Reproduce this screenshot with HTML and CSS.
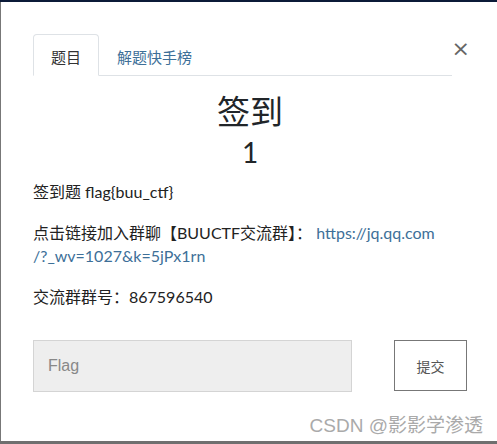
FILE: index.html
```html
<!DOCTYPE html>
<html lang="zh-CN">
<head>
  <meta charset="UTF-8" />
  <title>签到</title>
  <link rel="stylesheet" href="styles.css">
</head>
<body>
  <div class="topbar"></div>
  <div class="modal">
    <div class="modal-header">
      <ul class="tabs">
        <li class="tab active">题目</li>
        <li class="tab">解题快手榜</li>
      </ul>
      <span class="close">&times;</span>
    </div>

    <h2 class="challenge-name">签到</h2>
    <h3 class="challenge-value">1</h3>

    <div class="challenge-desc">
      <p>签到题 flag{buu_ctf}</p>
      <p>点击链接加入群聊【BUUCTF交流群】： <a href="#">https://jq.qq.com<br>/?_wv=1027&amp;k=5jPx1rn</a></p>
      <p>交流群群号：867596540</p>
    </div>

    <form class="submit-row">
      <input type="text" class="flag-input" placeholder="Flag" />
      <button type="button" class="submit-btn">提交</button>
    </form>

    <div class="watermark">CSDN @影影学渗透</div>
  </div>
  <div class="bottombar"></div>
</body>
</html>
```

FILE: styles.css
```css
body {
  margin: 0;
  font-family: Lato, "Noto Sans CJK SC", sans-serif;
  color: #212529;
  background: #fff;
  width: 497px;
  height: 444px;
  overflow: hidden;
}

.topbar {
  height: 2px;
  background: #0b1a38;
}

.bottombar {
  height: 3px;
  background: #6f6f6f;
}

.modal {
  height: 439px;
  border-left: 1px solid #777;
  padding: 0 30px 0 32px;
  box-sizing: border-box;
  display: flex;
  flex-direction: column;
}

.modal-header {
  display: flex;
  margin-top: 32px;
}

.tabs {
  width: 420px;
  display: flex;
  list-style: none;
  margin: 0;
  padding: 0;
  border-bottom: 1px solid #dee2e6;
}

.tab {
  padding: 0 17px;
  height: 40px;
  line-height: 44px;
  font-size: 15px;
  color: #3d6f98;
  border: 1px solid transparent;
  border-radius: 4px 4px 0 0;
  margin-bottom: -1px;
}

.tab.active {
  color: #333;
  border-color: #dee2e6 #dee2e6 #fff;
  background: #fff;
}

.close {
  margin-left: auto;
  margin-top: 4px;
  margin-right: -3px;
  font-family: "DejaVu Sans", sans-serif;
  font-size: 22px;
  line-height: 22px;
  height: 22px;
  color: #666;
}

.challenge-name {
  text-align: center;
  font-size: 33px;
  font-weight: normal;
  margin: 16px 0 0;
  line-height: 38px;
}

.challenge-value {
  text-align: center;
  font-size: 28px;
  font-weight: normal;
  margin: 6px 0 0;
  line-height: 32px;
}

.challenge-desc {
  font-size: 16px;
  line-height: 23px;
  color: #222;
  margin-top: 12px;
}

.challenge-desc p {
  margin: 0 0 18px;
}

.challenge-desc a {
  color: #3d6f98;
  text-decoration: none;
}

.submit-row {
  display: flex;
  align-items: flex-start;
  margin-top: 14px;
}

.flag-input {
  width: 319px;
  height: 52px;
  box-sizing: border-box;
  background: #eee;
  border: 1px solid #d4d4d4;
  padding: 0 14px;
  font-family: "Liberation Sans", Arial, sans-serif;
  font-size: 16px;
}

.flag-input::placeholder {
  color: #888;
}

.submit-btn {
  margin-left: auto;
  width: 73px;
  height: 51px;
  background: #fff;
  border: 1px solid #777;
  font-family: "Noto Sans CJK SC", sans-serif;
  font-size: 14px;
  color: #555;
}

.watermark {
  margin-top: auto;
  margin-right: -16px;
  margin-bottom: 4px;
  text-align: right;
  font-family: "Liberation Sans", "Noto Sans CJK SC", sans-serif;
  font-size: 19px;
  color: #aaa;
}
```
